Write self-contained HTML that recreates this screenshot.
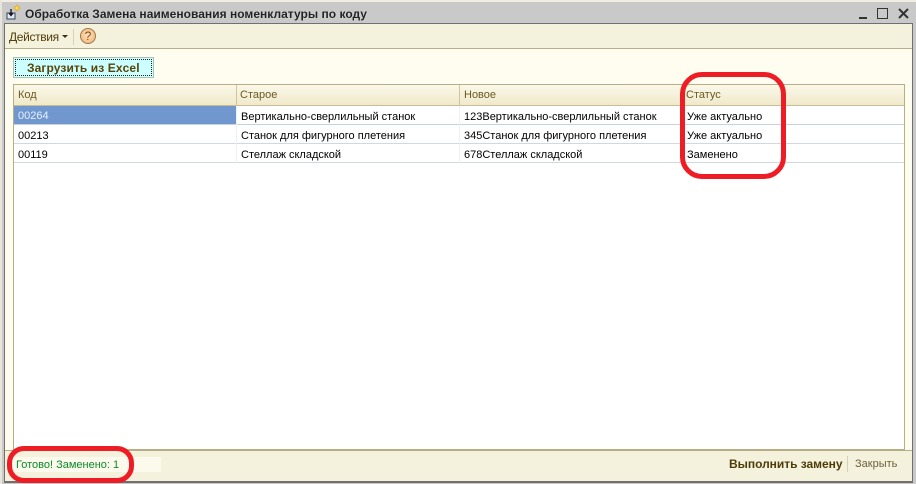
<!DOCTYPE html>
<html><head><meta charset="utf-8"><style>
html,body{margin:0;padding:0}
body{width:916px;height:484px;position:relative;overflow:hidden;background:#c9c9c9;font-family:"Liberation Sans",sans-serif;font-size:11px;color:#000}
div,span{position:absolute;white-space:nowrap;box-sizing:border-box}
.t{line-height:14px;height:14px}
.hl{height:1px;left:14px;width:890px;background:#c4d3e2}
.vl{width:1px;background:#eef0f2;top:106px;height:57px}
.hd{width:1px;background:#cfc49c;top:85px;height:21px}
.h{color:#6a5a22;top:88px}
</style></head><body>
<div style="left:0;top:0;width:916px;height:2px;background:#f1efe4"></div>
<div style="left:0;top:0;width:2px;height:484px;background:#e8e6da"></div>
<svg style="position:absolute;left:5px;top:4px" width="18" height="17" viewBox="0 0 18 17"><path d="M2 9h8v6H2z" fill="#dfe8f2" stroke="#33475e"/><path d="M6 5v6M4 9l2 2.500 2-2.500" stroke="#111" fill="none" stroke-width="1.300"/><path d="M12 1l3 3-3 3-3-3z" fill="#f7d654" stroke="#d9a520" stroke-width=".7"/></svg>
<div class="t" style="left:25px;top:7px;font-size:12px;font-weight:bold;letter-spacing:.02px;color:#222;text-shadow:0 0 1px #eee">Обработка Замена наименования номенклатуры по коду</div>
<div style="left:859px;top:17px;width:8px;height:2px;background:#333"></div>
<div style="left:877px;top:8px;width:11px;height:11px;border:1.500px solid #333"></div>
<svg style="position:absolute;left:898px;top:8px" width="12" height="12"><path d="M1 1l9 9M10 1l-9 9" stroke="#333" stroke-width="2"/></svg>

<div style="left:4px;top:23px;width:909px;height:460px;background:#fffcf0;border:1px solid #707070;border-bottom:2px solid #707070"></div>
<div style="left:5px;top:24px;width:907px;height:25px;background:#f4f1dc;border-bottom:1px solid #b8ad84"></div>
<div class="t" style="left:9px;top:30px;font-size:12px;letter-spacing:-.35px;color:#4f3f0a">Действия</div>
<div style="left:62px;top:35px;width:0;height:0;border-left:3px solid transparent;border-right:3px solid transparent;border-top:3px solid #3d3208"></div>
<div style="left:73px;top:29px;width:1px;height:16px;background:#d8d2b0"></div>
<div style="left:80px;top:28px;width:16px;height:16px;border-radius:50%;background:radial-gradient(circle at 50% 45%,#fde3c0,#f2b06a);border:1px solid #9c7a50;text-align:center;font-size:12px;line-height:14px;color:#7a4c12">?</div>

<div style="left:13px;top:57px;width:141px;height:21px;background:#ccffff;border:1px solid #a9c2b0"></div>
<div style="left:15px;top:59px;width:137px;height:17px;border:1px dotted #222"></div>
<div class="t" style="left:27px;top:61px;font-size:12px;letter-spacing:.1px;font-weight:bold;color:#5a4308">Загрузить из Excel</div>

<div style="left:13px;top:84px;width:892px;height:366px;background:#fff;border:1px solid #b8ad84"></div>
<div style="left:14px;top:85px;width:890px;height:21px;background:linear-gradient(#fbf8e9,#f0e9cb);border-bottom:1px solid #c9bd94"></div>
<div class="hd" style="left:236px"></div><div class="hd" style="left:459px"></div><div class="hd" style="left:682px"></div>
<div class="t h" style="left:18px">Код</div>
<div class="t h" style="left:240px">Старое</div>
<div class="t h" style="left:464px">Новое</div>
<div class="t h" style="left:686px">Статус</div>

<div style="left:14px;top:106px;width:222px;height:18px;background:#7098cf"></div>
<div class="hl" style="top:124px"></div><div class="hl" style="top:143px;background:#d2d8dd"></div><div class="hl" style="top:162px;background:#d2d8dd"></div>
<div class="vl" style="left:236px"></div><div class="vl" style="left:459px"></div><div class="vl" style="left:682px"></div>

<div class="t" style="left:18px;top:109px;color:#e8f0ff">00264</div>
<div class="t" style="left:241px;top:110px">Вертикально-сверлильный станок</div>
<div class="t" style="left:464px;top:110px">123Вертикально-сверлильный станок</div>
<div class="t" style="left:687px;top:110px">Уже актуально</div>
<div class="t" style="left:18px;top:129px">00213</div>
<div class="t" style="left:241px;top:129px">Станок для фигурного плетения</div>
<div class="t" style="left:464px;top:129px">345Станок для фигурного плетения</div>
<div class="t" style="left:687px;top:129px">Уже актуально</div>
<div class="t" style="left:18px;top:148px">00119</div>
<div class="t" style="left:241px;top:148px">Стеллаж складской</div>
<div class="t" style="left:464px;top:148px">678Стеллаж складской</div>
<div class="t" style="left:687px;top:148px">Заменено</div>

<div style="left:5px;top:450px;width:907px;height:31px;background:#f4f1dc;border-top:1px solid #b8ad84"></div>
<div style="left:13px;top:457px;width:148px;height:15px;background:#fcfaec"></div>
<div class="t" style="left:16px;top:458px;font-size:11px;color:#0b8a2a">Готово! Заменено: 1</div>
<div class="t" style="left:729px;top:457px;font-size:12px;font-weight:bold;letter-spacing:-.03px;color:#4d3c08">Выполнить замену</div>
<div style="left:847px;top:456px;width:1px;height:16px;background:#d8d2b0"></div>
<div class="t" style="left:855px;top:457px;font-size:11px;color:#6b6240">Закрыть</div>

<div style="left:680px;top:72px;width:106px;height:107px;border:5px solid #ee1c25;border-radius:22px"></div>
<div style="left:7px;top:446px;width:127px;height:37px;border:5px solid #ee1c25;border-radius:17px"></div>
</body></html>
